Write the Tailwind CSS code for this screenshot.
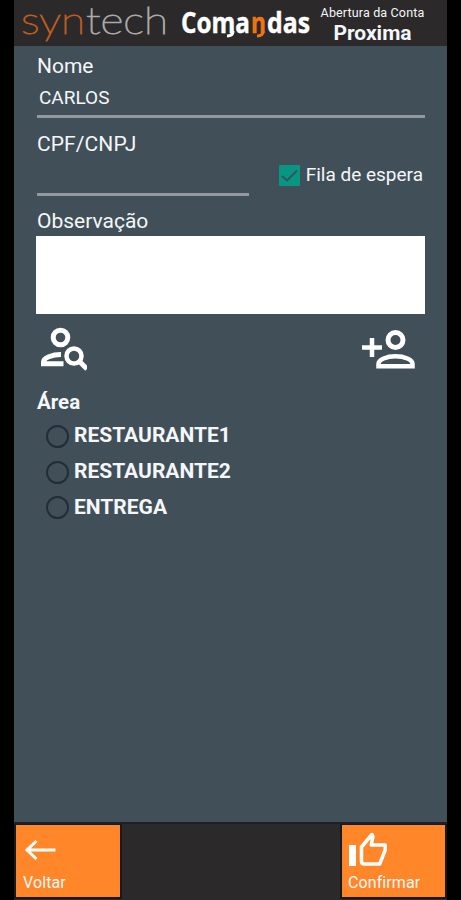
<!DOCTYPE html>
<html lang="pt-BR">
<head>
  <meta charset="UTF-8">
  <title>Syntech Comandas</title>
  <script src="https://cdn.jsdelivr.net/npm/@tailwindcss/browser@4"></script>
</head>
<body class="bg-black font-['Roboto',sans-serif] text-[#f4f7f9]">
  <div class="ml-[14px] w-[433px] h-[900px] flex flex-col bg-[#414f58]">

    <!-- Topo -->
    <header class="h-[46px] shrink-0 flex bg-[#2b292a]">
      <svg class="w-[302px] h-[46px] shrink-0 overflow-visible" viewBox="14 0 302 46">
        <g font-size="37" class="font-['Lato',sans-serif] font-thin" stroke-width="1.100">
          <text x="21" y="34" textLength="64" lengthAdjust="spacingAndGlyphs" fill="#bd5c20" stroke="#bd5c20">syn</text>
          <text x="86" y="34" textLength="82" lengthAdjust="spacingAndGlyphs" fill="#a9a9a9" stroke="#a9a9a9">tech</text>
        </g>
        <g font-size="28" class="font-['Open_Sans',sans-serif] font-bold">
          <text x="181" y="33" textLength="69" lengthAdjust="spacingAndGlyphs" fill="#fff" stroke="#fff" stroke-width=".4">Coma</text>
          <text x="251" y="33" textLength="15" lengthAdjust="spacingAndGlyphs" fill="#f37311" stroke="#f37311" stroke-width=".4">n</text>
          <text x="267" y="33" textLength="43" lengthAdjust="spacingAndGlyphs" fill="#fff" stroke="#fff" stroke-width=".4">das</text>
        </g>
        <path d="M233 31q0 5-6 5" fill="none" stroke="#fff" stroke-width="3" />
        <path d="M263 31q0 5-6 5" fill="none" stroke="#f37311" stroke-width="3" />
      </svg>
      <div class="w-[113px] text-center whitespace-nowrap">
        <p class="pt-[6px] text-[12.5px] leading-[14px] tracking-[0.15px]">Abertura da Conta</p>
        <p class="pt-px text-[21px] leading-[25px] font-bold">Proxima</p>
      </div>
    </header>

    <!-- Formulário -->
    <main class="flex-1 pl-[23px] pr-[22px]">
      <label class="block pt-[8px] text-[21px] leading-[24px]">Nome</label>
      <div class="h-[40px] pt-[10px] pl-[2px] border-b-3 border-[#93989f] text-[19px] leading-[20px]">CARLOS</div>

      <div class="flex justify-between h-[78px]">
        <div class="w-[212px] border-b-3 border-[#93989f]">
          <label class="block pt-[14px] text-[21px] leading-[24px] tracking-[0.1px]">CPF/CNPJ</label>
        </div>
        <div class="flex items-center gap-[6px] h-[22px] mt-[46px] mr-[2px]">
          <svg class="w-[21px] h-[21px]" viewBox="0 0 21 21">
            <rect width="21" height="21" rx="1" fill="#079681" />
            <path d="M3 11l5 4.500L18 5.500" fill="none" stroke="#34545c" stroke-width="1.800" />
          </svg>
          <span class="text-[19px] leading-[22px] whitespace-nowrap">Fila de espera</span>
        </div>
      </div>

      <label class="block pt-[13px] text-[21px] leading-[24px]">Observação</label>
      <div class="h-[78px] mt-[3px] -ml-px bg-white"></div>

      <div class="flex justify-between h-[76px] pt-[12px]">
        <svg class="w-[50px] h-[46px]" viewBox="37 326 50 46" fill="none" stroke="#fff" stroke-width="5">
          <circle cx="60.500" cy="337.500" r="7.300" />
          <path d="M61 354.500c-9 0-17.500 3.500-17.500 7.500v1.800h20" stroke-width="5" />
          <circle cx="74" cy="356" r="7.500" stroke-width="4.500" />
          <path d="M79.500 361.500l7.500 7.500" stroke-width="5" />
        </svg>
        <svg class="w-[56px] h-[46px] mr-[8px]" viewBox="361 326 56 46" fill="none" stroke="#fff" stroke-width="5">
          <path d="M362 347.500h20M372 338v19" stroke-width="4.500" />
          <circle cx="395.500" cy="340" r="7.500" />
          <path d="M378.500 366.300v-2.500c0-4 8-7.500 17-7.500s17 3.500 17 7.500v2.500z" stroke-width="4.500" />
        </svg>
      </div>

      <h2 class="text-[20.5px] leading-[24px] font-bold">Área</h2>
      <div class="flex flex-col pt-[4px] pl-[9px] text-[21px] font-bold">
        <div class="flex items-center gap-[5px] h-[36px]"><span class="w-[23px] h-[23px] rounded-full border-2 border-[#232d35]"></span>RESTAURANTE1</div>
        <div class="flex items-center gap-[5px] h-[36px]"><span class="w-[23px] h-[23px] rounded-full border-2 border-[#232d35]"></span>RESTAURANTE2</div>
        <div class="flex items-center gap-[5px] h-[35px]"><span class="w-[23px] h-[23px] rounded-full border-2 border-[#232d35]"></span>ENTREGA</div>
      </div>
    </main>

    <!-- Rodapé -->
    <footer class="h-[78px] shrink-0 flex justify-between bg-[#2b292a] border-t-2 border-[#1b2127]">
      <button class="w-[108px] h-[75px] border-2 border-t-1 border-[#17191c] bg-[#ff8729] text-left">
        <svg class="w-[40px] h-[44px] ml-[6px]" viewBox="22 827 40 44" fill="none" stroke="#fff" stroke-width="3">
          <path d="M55.500 849H27M36.500 840l-9.500 9 9.500 9" />
        </svg>
        <span class="block pl-[7px] text-[16px] leading-[22px] tracking-[0.1px]">Voltar</span>
      </button>
      <button class="w-[107px] h-[75px] border-2 border-t-1 border-[#17191c] bg-[#ff8729] text-left">
        <svg class="w-[44px] h-[44px] ml-[5px]" viewBox="347 827 44 44">
          <path d="M349 844h7v21h-7z" fill="#fff" />
          <path d="M361.500 846l10.500-12.500 1 2-1.800 8.500h14v5l-5.500 14h-15.500q-2.700 0-2.700-2.500z" fill="none" stroke="#fff" stroke-width="3.500" stroke-linejoin="round" />
        </svg>
        <span class="block pl-[6px] text-[16px] leading-[22px] tracking-[0.1px]">Confirmar</span>
      </button>
    </footer>
  </div>
</body>
</html>
